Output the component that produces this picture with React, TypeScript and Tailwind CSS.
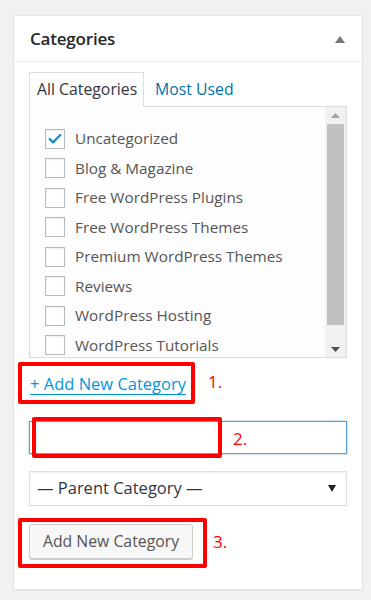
import { Check } from "lucide-react"

const categories = [
  { name: "Uncategorized", checked: true },
  { name: "Blog & Magazine", checked: false },
  { name: "Free WordPress Plugins", checked: false },
  { name: "Free WordPress Themes", checked: false },
  { name: "Premium WordPress Themes", checked: false },
  { name: "Reviews", checked: false },
  { name: "WordPress Hosting", checked: false },
  { name: "WordPress Tutorials", checked: false },
]

function Marker({ className, label, labelClass }: { className: string; label: string; labelClass: string }) {
  return (
    <>
      <div className={`absolute border-[4px] border-[#ff0000] rounded-[2px] pointer-events-none ${className}`} />
      <span className={`absolute text-[17px] leading-none text-[#ff0000] ${labelClass}`}>{label}</span>
    </>
  )
}

export default function App() {
  return (
    <div className="w-[371px] h-[600px] bg-[#f1f1f1] pt-[15px] pl-[13px] font-['Open_Sans','Noto_Sans',sans-serif] text-[#444]">
      <div className="relative w-[350px] h-[575px] bg-white border border-[#e5e5e5] shadow-[0_1px_1px_rgba(0,0,0,0.04)]">
        {/* header */}
        <div className="h-[46px] flex items-center justify-between pl-[16px] pr-[17px] border-b border-[#eeeeee]">
          <h2 className="text-[17px] font-semibold text-[#23282d] tracking-[-0.2px]">Categories</h2>
          <svg width="10" height="7" viewBox="0 0 10 7" className="mt-[1px]">
            <path d="M5 0 L10 7 L0 7 Z" fill="#72777c" />
          </svg>
        </div>

        <div className="px-[15px] pt-[10px]">
          {/* tabs */}
          <div className="flex items-end h-[35px] text-[15.8px]">
            <div className="relative z-10 h-[35px] w-[115px] pl-[7px] flex items-center border border-b-0 border-[#dddddd] bg-[#fdfdfd] text-[#32373c]">
              All Categories
            </div>
            <div className="h-[35px] pl-[11px] flex items-center text-[#0073aa]">Most Used</div>
          </div>

          {/* list box */}
          <div className="-mt-[1px] h-[252px] border border-[#dddddd] bg-[#fdfdfd] flex overflow-hidden">
            <ul className="flex-1 pt-[17px] pl-[15px]">
              {categories.map((c) => (
                <li key={c.name} className="h-[29.5px] flex items-center gap-[10px] text-[15.3px] text-[#555] whitespace-nowrap">
                  <span className="w-[20px] h-[20px] border border-[#b4b9be] bg-white flex items-center justify-center shrink-0 shadow-[inset_0_1px_2px_rgba(0,0,0,0.07)]">
                    {c.checked && <Check className="w-[16px] h-[16px] text-[#1e8cbe]" strokeWidth={3.5} />}
                  </span>
                  {c.name}
                </li>
              ))}
            </ul>
            <div className="w-[21px] bg-[#f1f1f1] flex flex-col items-center pt-[6px] pb-[5px]">
              <svg width="9" height="5" viewBox="0 0 9 5">
                <path d="M4.5 0 L9 5 L0 5 Z" fill="#a3a3a3" />
              </svg>
              <div className="w-[17px] flex-1 bg-[#c1c1c1] mt-[6px] mb-[22px]" />
              <svg width="9" height="5" viewBox="0 0 9 5">
                <path d="M0 0 L9 0 L4.5 5 Z" fill="#505050" />
              </svg>
            </div>
          </div>

          {/* add new */}
          <div className="pt-[14px] h-[63px]">
            <a className="text-[16.5px] font-medium text-[#0096dd] underline underline-offset-[4px] pl-[1px]">+ Add New Category</a>
          </div>
          <div className="h-[33px] border border-[#5b9dd9] shadow-[0_0_2px_rgba(30,140,190,0.6)] bg-white" />
          <div className="mt-[17px] h-[35px] border border-[#dddddd] flex items-center justify-between pl-[7px] pr-[10px] text-[16.5px] text-[#32373c] shadow-[inset_0_1px_2px_rgba(0,0,0,0.07)]">
            <span>— Parent Category —</span>
            <svg width="8" height="7" viewBox="0 0 8 7">
              <path d="M0 0 L8 0 L4 7 Z" fill="#222" />
            </svg>
          </div>
          <button className="mt-[18px] h-[35px] w-[164px] rounded-[3px] border border-[#cccccc] bg-[#f7f7f7] shadow-[0_1px_0_#cccccc] text-[15.8px] text-[#555]">
            Add New Category
          </button>
        </div>

        {/* annotations */}
        <Marker className="left-[4px] top-[346px] w-[177px] h-[42px]" label="1." labelClass="left-[194px] top-[357px]" />
        <Marker className="left-[18px] top-[401px] w-[190px] h-[41px]" label="2." labelClass="left-[219px] top-[414px]" />
        <Marker className="left-[4px] top-[502px] w-[189px] h-[50px]" label="3." labelClass="left-[199px] top-[517px]" />
      </div>
    </div>
  )
}
